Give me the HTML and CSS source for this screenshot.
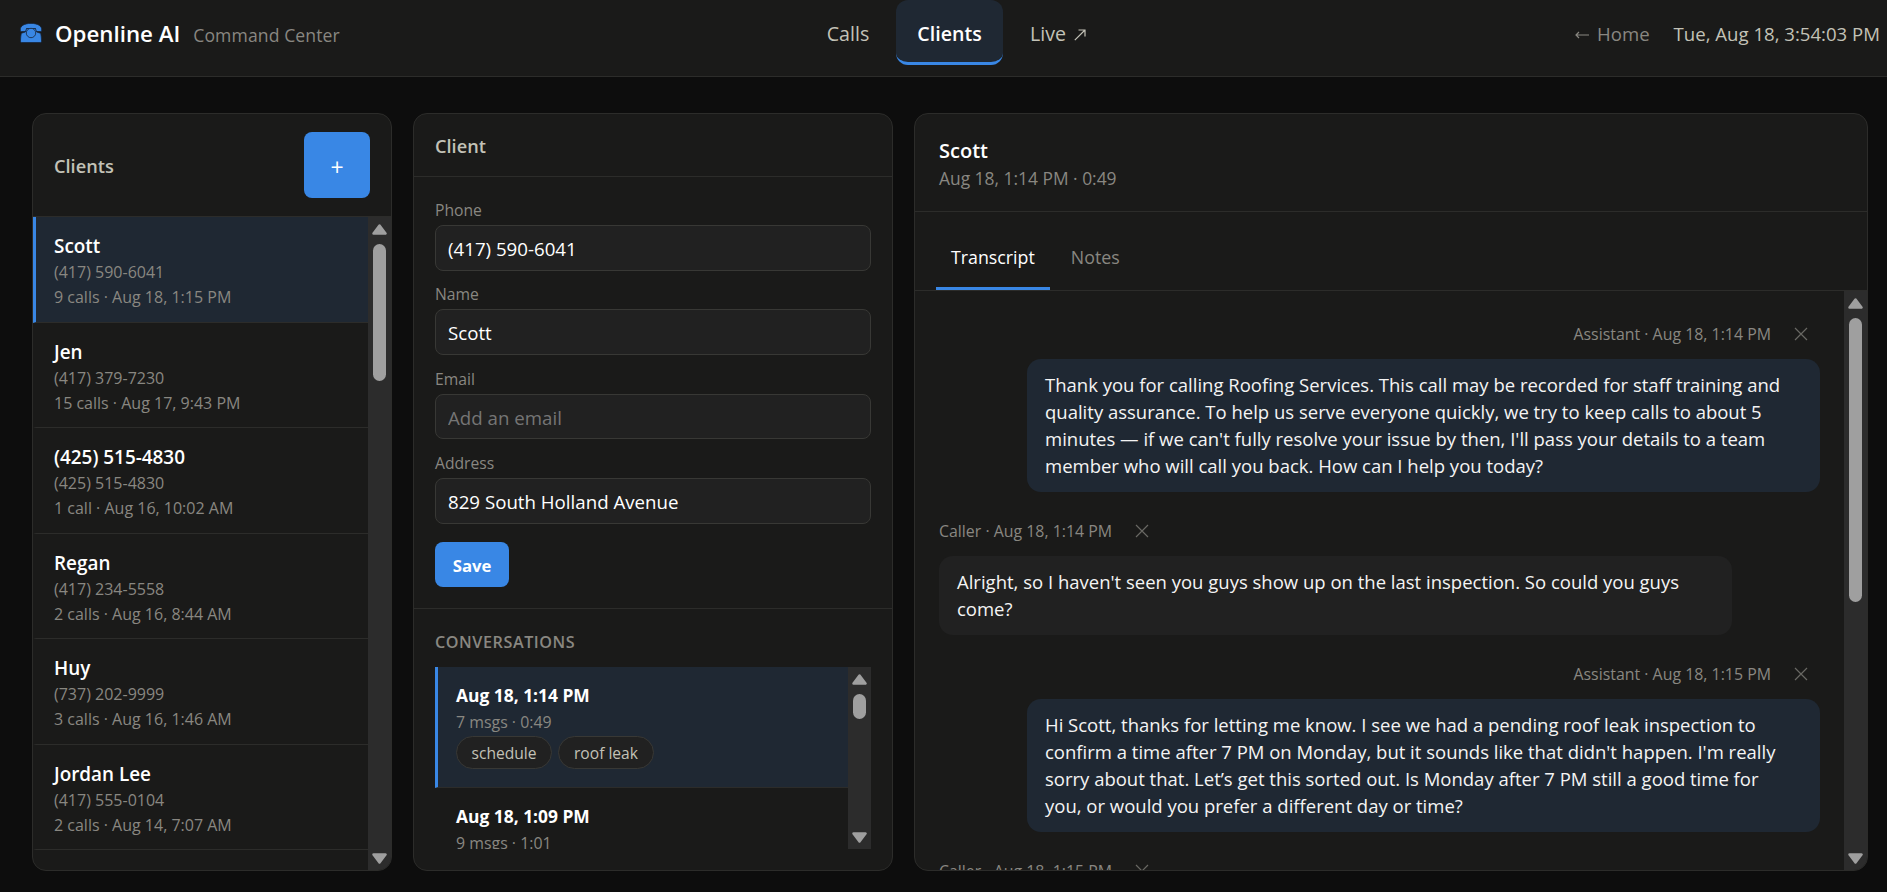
FILE: index.html
```html
<!DOCTYPE html>
<html lang="en">
<head>
  <meta charset="UTF-8">
  <meta name="viewport" content="width=device-width, initial-scale=1.0">
  <title>Openline AI - Command Center</title>
  <link rel="stylesheet" href="styles.css">
</head>
<body>
  <header class="topbar">
    <div class="brand">
      <svg class="brand-icon" viewBox="0 0 22 20" width="22" height="20">
        <path d="M0.3 7.2C0 2.6 4.6 0.4 11 0.4s11 2.2 10.7 6.8c0 .9-.5 1.3-1.3 1.3h-3.7c-.8 0-1.2-.5-1.2-1.2V5.6H6.5v1.7c0 .7-.4 1.2-1.2 1.2H1.6C.8 8.5.3 8.1.3 7.2z"/>
        <path d="M6.600 5.500h8.800l1.300 3.500 4 1.300c.4 2 .8 5 .8 7.700 0 1-.5 1.500-1.500 1.500H2c-1 0-1.500-.5-1.500-1.500 0-2.700.4-5.700.8-7.700l4-1.300z"/>
        <circle cx="11" cy="10" r="4.700"/>
      </svg>
      <span class="brand-name">Openline AI</span>
      <span class="brand-sub">Command Center</span>
    </div>
    <nav class="nav">
      <a class="nav-link nav-calls">Calls</a>
      <a class="nav-link nav-clients active">Clients</a>
      <a class="nav-link nav-live">Live
        <svg class="arrow-icon" viewBox="0 0 12 12" width="12" height="12"><path d="M0.800 11.200L11 1M4.500 1H11v6.500"/></svg>
      </a>
    </nav>
    <div class="topbar-right">
      <a class="home-link">
        <svg class="arrow-icon" viewBox="0 0 14 8" width="14" height="8"><path d="M14 4H1M4 1L1 4l3 3"/></svg>
        <span>Home</span>
      </a>
      <span class="clock">Tue, Aug 18, 3:54:03 PM</span>
    </div>
  </header>

  <main class="layout">
    <!-- Clients list -->
    <section class="panel">
      <div class="list-header">
        <h2>Clients</h2>
        <button class="add-btn">+</button>
      </div>
      <div class="scroll-area">
        <div class="scroll-content">
          <div class="client-row active">
            <div class="client-name">Scott</div>
            <div class="client-meta">(417) 590-6041</div>
            <div class="client-meta">9 calls · Aug 18, 1:15 PM</div>
          </div>
          <div class="client-row">
            <div class="client-name">Jen</div>
            <div class="client-meta">(417) 379-7230</div>
            <div class="client-meta">15 calls · Aug 17, 9:43 PM</div>
          </div>
          <div class="client-row">
            <div class="client-name">(425) 515-4830</div>
            <div class="client-meta">(425) 515-4830</div>
            <div class="client-meta">1 call · Aug 16, 10:02 AM</div>
          </div>
          <div class="client-row">
            <div class="client-name">Regan</div>
            <div class="client-meta">(417) 234-5558</div>
            <div class="client-meta">2 calls · Aug 16, 8:44 AM</div>
          </div>
          <div class="client-row">
            <div class="client-name">Huy</div>
            <div class="client-meta">(737) 202-9999</div>
            <div class="client-meta">3 calls · Aug 16, 1:46 AM</div>
          </div>
          <div class="client-row">
            <div class="client-name">Jordan Lee</div>
            <div class="client-meta">(417) 555-0104</div>
            <div class="client-meta">2 calls · Aug 14, 7:07 AM</div>
          </div>
        </div>
        <div class="scrollbar">
          <svg class="sb-arrow" viewBox="0 0 15 11" width="15" height="11"><path d="M7.500 1.500L13.500 9.500H1.500z"/></svg>
          <div class="sb-thumb thumb-clients"></div>
          <svg class="sb-arrow sb-down" viewBox="0 0 15 11" width="15" height="11"><path d="M7.500 9.500L13.500 1.500H1.500z"/></svg>
        </div>
      </div>
    </section>

    <!-- Client details -->
    <section class="panel">
      <div class="client-header"><h2>Client</h2></div>
      <form class="client-form">
        <label for="phone">Phone</label>
        <input type="text" id="phone" value="(417) 590-6041">
        <label for="name">Name</label>
        <input type="text" id="name" value="Scott">
        <label for="email">Email</label>
        <input type="text" id="email" placeholder="Add an email">
        <label for="address">Address</label>
        <input type="text" id="address" value="829 South Holland Avenue">
        <button type="button" class="save-btn">Save</button>
      </form>
      <div class="conversations">
        <h3>CONVERSATIONS</h3>
        <div class="scroll-area">
          <div class="scroll-content">
            <div class="conv-row active">
              <div class="conv-title">Aug 18, 1:14 PM</div>
              <div class="conv-meta">7 msgs · 0:49</div>
              <div class="tags">
                <span class="tag">schedule</span>
                <span class="tag">roof leak</span>
              </div>
            </div>
            <div class="conv-row">
              <div class="conv-title">Aug 18, 1:09 PM</div>
              <div class="conv-meta">9 msgs · 1:01</div>
            </div>
          </div>
          <div class="scrollbar">
            <svg class="sb-arrow" viewBox="0 0 15 11" width="15" height="11"><path d="M7.500 1.500L13.500 9.500H1.500z"/></svg>
            <div class="sb-thumb thumb-conv"></div>
            <svg class="sb-arrow sb-down" viewBox="0 0 15 11" width="15" height="11"><path d="M7.500 9.500L13.500 1.500H1.500z"/></svg>
          </div>
        </div>
      </div>
    </section>

    <!-- Transcript -->
    <section class="panel">
      <div class="call-header">
        <div class="call-name">Scott</div>
        <div class="call-sub">Aug 18, 1:14 PM · 0:49</div>
      </div>
      <div class="tabs">
        <button class="tab active">Transcript</button>
        <button class="tab">Notes</button>
      </div>
      <div class="scroll-area">
        <div class="scroll-content messages">
          <div class="msg assistant">
            <div class="msg-meta">
              <span>Assistant · Aug 18, 1:14 PM</span>
              <svg class="close-icon" viewBox="0 0 14 14" width="14" height="14"><path d="M1 1l12 12M13 1L1 13"/></svg>
            </div>
            <div class="bubble">Thank you for calling Roofing Services. This call may be recorded for staff training and<br>quality assurance. To help us serve everyone quickly, we try to keep calls to about 5<br>minutes — if we can't fully resolve your issue by then, I'll pass your details to a team<br>member who will call you back. How can I help you today?</div>
          </div>
          <div class="msg caller">
            <div class="msg-meta">
              <span>Caller · Aug 18, 1:14 PM</span>
              <svg class="close-icon" viewBox="0 0 14 14" width="14" height="14"><path d="M1 1l12 12M13 1L1 13"/></svg>
            </div>
            <div class="bubble">Alright, so I haven't seen you guys show up on the last inspection. So could you guys<br>come?</div>
          </div>
          <div class="msg assistant">
            <div class="msg-meta">
              <span>Assistant · Aug 18, 1:15 PM</span>
              <svg class="close-icon" viewBox="0 0 14 14" width="14" height="14"><path d="M1 1l12 12M13 1L1 13"/></svg>
            </div>
            <div class="bubble">Hi Scott, thanks for letting me know. I see we had a pending roof leak inspection to<br>confirm a time after 7 PM on Monday, but it sounds like that didn't happen. I'm really<br>sorry about that. Let’s get this sorted out. Is Monday after 7 PM still a good time for<br>you, or would you prefer a different day or time?</div>
          </div>
          <div class="msg caller">
            <div class="msg-meta">
              <span>Caller · Aug 18, 1:15 PM</span>
              <svg class="close-icon" viewBox="0 0 14 14" width="14" height="14"><path d="M1 1l12 12M13 1L1 13"/></svg>
            </div>
          </div>
        </div>
        <div class="scrollbar">
          <svg class="sb-arrow" viewBox="0 0 15 11" width="15" height="11"><path d="M7.500 1.500L13.500 9.500H1.500z"/></svg>
          <div class="sb-thumb thumb-msgs"></div>
          <svg class="sb-arrow sb-down" viewBox="0 0 15 11" width="15" height="11"><path d="M7.500 9.500L13.500 1.500H1.500z"/></svg>
        </div>
      </div>
    </section>
  </main>
</body>
</html>
```
FILE: styles.css
```css
* {
  margin: 0;
  padding: 0;
  box-sizing: border-box;
}

body {
  font-family: "Segoe UI", "Open Sans", "Noto Sans", sans-serif;
  font-size: 17px;
  background: #0d0d0d;
  color: #fff;
  height: 100vh;
  overflow: hidden;
  display: flex;
  flex-direction: column;
}

button, input {
  font-family: inherit;
}

/* Top bar */
.topbar {
  display: grid;
  grid-template-columns: 1fr auto 1fr;
  align-items: start;
  height: 77px;
  padding: 0 7px 0 20px;
  background: #1a1a19;
  border-bottom: 1px solid #2c2c2a;
  white-space: nowrap;
}

.brand {
  display: flex;
  align-items: center;
  height: 66px;
}

.brand-icon {
  fill: #3987e5;
  stroke: #16263c;
  stroke-width: 0.8;
  margin-right: 13px;
  overflow: visible;
}

.brand-name {
  font-size: 22.3px;
  font-weight: 600;
}

.brand-sub {
  font-size: 17.6px;
  color: #898781;
  letter-spacing: 0.1px;
  margin-left: 13px;
  padding-top: 3px;
}

.nav {
  display: flex;
  gap: 5px;
  margin-left: 13px;
}

.nav-link {
  display: flex;
  align-items: center;
  justify-content: center;
  height: 65px;
  color: #c3c2b7;
  font-size: 19.6px;
  border-bottom: 3px solid transparent;
  border-radius: 12px;
  padding-top: 4px;
}

.nav-link.active {
  background: #1f2833;
  color: #fff;
  font-weight: 600;
  border-bottom-color: #3987e5;
}

.nav-calls {
  width: 86px;
}

.nav-clients {
  width: 107px;
}

.nav-live {
  width: 100px;
}

.arrow-icon {
  fill: none;
  stroke: currentColor;
  stroke-width: 1.2;
}

.nav-live .arrow-icon {
  margin: 4px 0 0 8px;
}

.topbar-right {
  display: flex;
  justify-content: flex-end;
  align-items: center;
  gap: 24px;
  height: 66px;
  font-size: 18.6px;
}

.home-link {
  display: flex;
  align-items: center;
  gap: 8px;
  color: #898781;
}

.home-link .arrow-icon {
  margin-top: 3px;
}

.clock {
  color: #c3c2b7;
}

/* Columns */
.layout {
  flex: 1;
  min-height: 0;
  display: grid;
  grid-template-columns: 360px 480px 1fr;
  gap: 21px;
  padding: 36px 19px 21px 32px;
}

.panel {
  display: flex;
  flex-direction: column;
  min-height: 0;
  background: #1a1a19;
  border: 1px solid #2c2c2a;
  border-radius: 14px;
  overflow: hidden;
}

h2 {
  font-size: 18.2px;
  font-weight: 600;
  color: #c3c2b7;
  padding-top: 2px;
}

/* Scroll areas */
.scroll-area {
  flex: 1;
  min-height: 0;
  display: flex;
  overflow: hidden;
}

.scroll-content {
  flex: 1;
  min-width: 0;
  overflow: hidden;
}

.scrollbar {
  width: 23px;
  flex-shrink: 0;
  display: flex;
  flex-direction: column;
  align-items: center;
  padding: 7px 0 6px;
  background: #2c2c2c;
}

.sb-arrow {
  flex-shrink: 0;
  fill: #9f9f9f;
  stroke: #9f9f9f;
  stroke-width: 2.5;
  stroke-linejoin: round;
}

.sb-down {
  margin-top: auto;
}

.sb-thumb {
  width: 13px;
  margin-top: 9px;
  border-radius: 7px;
  background: #9f9f9f;
}

.thumb-clients {
  height: 137px;
}

.thumb-conv {
  height: 25px;
}

.thumb-msgs {
  height: 284px;
}

/* Clients list */
.list-header {
  display: flex;
  align-items: center;
  justify-content: space-between;
  height: 103px;
  padding: 0 21px;
  border-bottom: 1px solid #2c2c2a;
}

.add-btn {
  width: 66px;
  height: 66px;
  padding-top: 3px;
  border: none;
  border-radius: 8px;
  background: #3987e5;
  color: #fff;
  font-size: 23px;
}

.client-row {
  height: 105.5px;
  padding: 16px 0 0 18px;
  border-left: 3px solid transparent;
  border-bottom: 1px solid #2c2c2a;
}

.client-row.active {
  background: #1f2833;
  border-left-color: #3987e5;
}

.client-name {
  font-size: 18.9px;
  font-weight: 600;
  line-height: 27px;
}

.client-meta {
  font-size: 16px;
  line-height: 25px;
  color: #898781;
}

/* Client form */
.client-header {
  display: flex;
  align-items: center;
  height: 63px;
  padding: 0 21px;
  border-bottom: 1px solid #2c2c2a;
}

.client-form {
  height: 432px;
  padding: 20px 21px 0;
  border-bottom: 1px solid #2c2c2a;
}

.client-form label {
  display: block;
  height: 28px;
  line-height: 27px;
  font-size: 15.7px;
  color: #898781;
}

.client-form input {
  display: block;
  width: 100%;
  height: 45.5px;
  margin-bottom: 10.9px;
  padding: 1px 12px 0;
  border: 1px solid #383835;
  border-radius: 8px;
  background: #212121;
  color: #fff;
  font-size: 18.7px;
}

.client-form input::placeholder {
  color: #757575;
}

.save-btn {
  width: 74px;
  height: 45px;
  margin-top: 7px;
  padding-top: 2px;
  border: none;
  border-radius: 8px;
  background: #3987e5;
  color: #fff;
  font-size: 16.7px;
  font-weight: 700;
}

/* Conversations */
.conversations {
  flex: 1;
  min-height: 0;
  display: flex;
  flex-direction: column;
  padding: 18px 21px 21px;
}

.conversations h3 {
  height: 40px;
  line-height: 30px;
  font-size: 16.2px;
  font-weight: 600;
  letter-spacing: 0.55px;
  color: #898781;
}

.conv-row {
  height: 121px;
  padding: 14px 0 0 18px;
  border-left: 3px solid transparent;
  border-bottom: 1px solid #2c2c2a;
}

.conv-row.active {
  background: #1f2833;
  border-left-color: #3987e5;
}

.conv-title {
  font-size: 17.4px;
  font-weight: 700;
  line-height: 28px;
}

.conv-meta {
  font-size: 15.9px;
  line-height: 27px;
  color: #898781;
}

.tags {
  display: flex;
  gap: 6px;
}

.tag {
  width: 96px;
  height: 33px;
  line-height: 32px;
  text-align: center;
  font-size: 15.6px;
  color: #c3c2b7;
  background: #212121;
  border: 1px solid #383835;
  border-radius: 17px;
}

/* Call header and tabs */
.call-header {
  height: 98px;
  padding: 23px 24px 0;
  border-bottom: 1px solid #2c2c2a;
}

.call-name {
  font-size: 20px;
  font-weight: 600;
  line-height: 28px;
}

.call-sub {
  font-size: 17.4px;
  line-height: 27px;
  color: #898781;
}

.tabs {
  display: flex;
  align-items: flex-end;
  gap: 6px;
  height: 79px;
  padding-left: 21px;
  border-bottom: 1px solid #2c2c2a;
}

.tab {
  height: 66px;
  padding: 2px 15px 0;
  border: none;
  border-bottom: 3px solid transparent;
  background: none;
  color: #898781;
  font-size: 17.8px;
}

.tab.active {
  color: #fff;
  border-bottom-color: #3987e5;
}

/* Messages */
.messages {
  display: flex;
  flex-direction: column;
  gap: 21px;
  padding: 25px 24px 0;
}

.msg {
  display: flex;
  flex-direction: column;
  flex-shrink: 0;
}

.msg.assistant {
  align-items: flex-end;
}

.msg-meta {
  display: flex;
  align-items: center;
  gap: 23px;
  height: 43px;
  padding: 0 12px 7px 0;
  font-size: 15.9px;
  color: #898781;
}

.close-icon {
  fill: none;
  stroke: #696863;
  stroke-width: 1.2;
}

.bubble {
  width: 793px;
  padding: 12px 18px 13px;
  border-radius: 14px;
  background: #212121;
  font-size: 18.5px;
  line-height: 27px;
  white-space: nowrap;
  color: #f4f4f4;
}

.assistant .bubble {
  background: #1f2833;
}
```
